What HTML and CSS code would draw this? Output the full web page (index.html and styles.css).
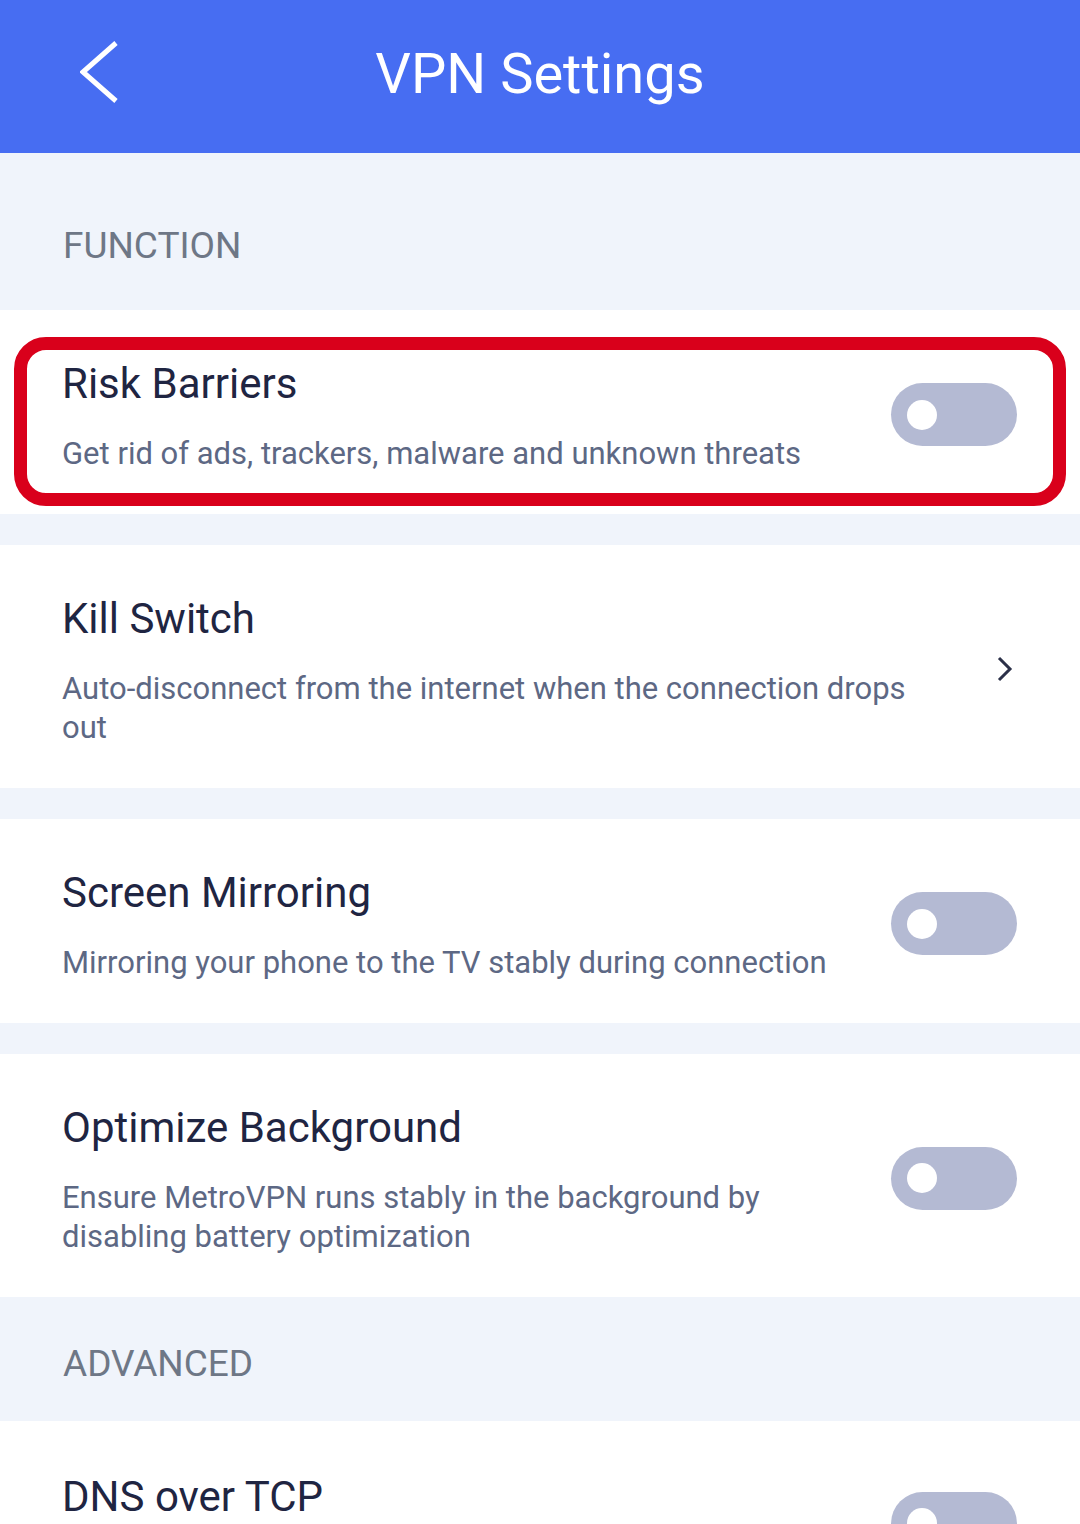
FILE: index.html
```html
<!DOCTYPE html>
<html lang="en">
<head>
<meta charset="utf-8">
<title>VPN Settings</title>
<link rel="stylesheet" href="styles.css">
</head>
<body>
<div class="app">
  <header class="topbar">
    <div class="topbar-left">
      <svg class="back" width="50" height="70" viewBox="0 0 50 70" aria-hidden="true">
        <polyline points="36,4 3,33 36,62" fill="none" stroke="#ffffff" stroke-width="5"/>
      </svg>
    </div>
    <h1 class="topbar-title">VPN Settings</h1>
    <div class="topbar-right"></div>
  </header>

  <div class="section-label section-label--first">FUNCTION</div>

  <div class="row row--highlight">
    <div class="row-text">
      <div class="row-title">Risk Barriers</div>
      <div class="row-sub">Get rid of ads, trackers, malware and unknown threats</div>
    </div>
    <div class="toggle"><span class="knob"></span></div>
    <div class="highlight"></div>
  </div>

  <div class="row row--link">
    <div class="row-text">
      <div class="row-title">Kill Switch</div>
      <div class="row-sub">Auto-disconnect from the internet when the connection drops out</div>
    </div>
    <svg class="chev" width="20" height="28" viewBox="0 0 20 28" aria-hidden="true">
      <polyline points="4,3 15,14 4,25" fill="none" stroke="#2b3048" stroke-width="3"/>
    </svg>
  </div>

  <div class="row">
    <div class="row-text">
      <div class="row-title">Screen Mirroring</div>
      <div class="row-sub">Mirroring your phone to the TV stably during connection</div>
    </div>
    <div class="toggle"><span class="knob"></span></div>
  </div>

  <div class="row">
    <div class="row-text">
      <div class="row-title">Optimize Background</div>
      <div class="row-sub">Ensure MetroVPN runs stably in the background by disabling battery optimization</div>
    </div>
    <div class="toggle"><span class="knob"></span></div>
  </div>

  <div class="section-label section-label--adv">ADVANCED</div>

  <div class="row row--last">
    <div class="row-text row-text--top">
      <div class="row-title">DNS over TCP</div>
    </div>
    <div class="toggle"><span class="knob"></span></div>
  </div>
</div>
</body>
</html>
```

FILE: styles.css
```css
* { box-sizing: border-box; }

html, body {
  margin: 0;
  padding: 0;
  background: #f0f4fb;
}

body {
  font-family: Roboto, "Noto Sans", "Liberation Sans", sans-serif;
  width: 1080px;
  height: 1524px;
  overflow: hidden;
}

.app {
  display: flex;
  flex-direction: column;
  gap: 31px;
}

.topbar {
  height: 153px;
  background: #476df2;
  display: grid;
  grid-template-columns: 1fr auto 1fr;
  align-items: center;
  padding-bottom: 6px;
}

.topbar-left {
  display: flex;
  align-items: center;
  padding-left: 80px;
}

.back { display: block; }

.topbar-title {
  margin: 0;
  color: #ffffff;
  font-size: 56px;
  font-weight: 400;
  line-height: 64px;
  letter-spacing: 0;
}

.section-label {
  color: #6e7786;
  font-size: 37px;
  line-height: 48px;
  padding: 0 63px;
}

.section-label--first {
  margin-top: -31px;
  padding-top: 69px;
  padding-bottom: 40px;
}

.section-label--adv {
  margin-top: -31px;
  padding-top: 43px;
  padding-bottom: 33px;
  margin-bottom: -31px;
}

.row {
  position: relative;
  background: #ffffff;
  display: flex;
  align-items: center;
  padding: 46px 63px 41px 62px;
}

.section-label--first + .row { margin-top: -31px; }

.row-text {
  flex: 1;
  min-width: 0;
  padding-right: 40px;
}

.row--link .row-text { padding-right: 60px; }

.row--last {
  min-height: 204px;
  padding-top: 0;
  padding-bottom: 0;
}

.row-text--top {
  align-self: flex-start;
  padding-top: 48px;
}

.row-title {
  color: #1f2542;
  font-size: 42px;
  line-height: 56px;
}

.row-sub {
  margin-top: 22px;
  color: #5d6884;
  font-size: 31px;
  line-height: 39px;
}

.toggle {
  flex: none;
  width: 126px;
  height: 63px;
  border-radius: 32px;
  background: #b4bad3;
  display: flex;
  align-items: center;
  padding-left: 16px;
}

.knob {
  width: 30px;
  height: 30px;
  border-radius: 50%;
  background: #ffffff;
}

.chev {
  flex: none;
  display: block;
  margin-right: 2px;
}

.highlight {
  position: absolute;
  left: 14px;
  right: 14px;
  top: 27px;
  bottom: 8px;
  border: 13px solid #d9001b;
  border-radius: 32px;
  pointer-events: none;
}
```
